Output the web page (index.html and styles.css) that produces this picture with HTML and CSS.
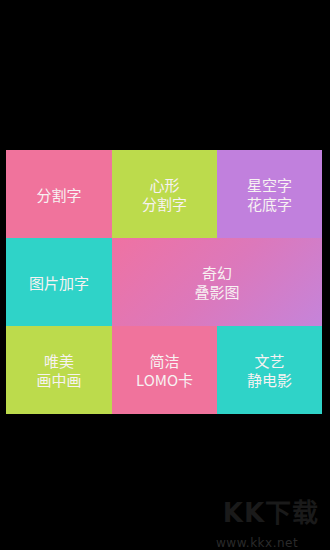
FILE: index.html
```html
<!DOCTYPE html>
<html lang="zh-CN">
<head>
<meta charset="utf-8">
<link rel="stylesheet" href="styles.css">
</head>
<body>
<div class="screen">
  <div class="grid">
    <div class="tile pink">分割字</div>
    <div class="tile green">心形<br>分割字</div>
    <div class="tile purple">星空字<br>花底字</div>
    <div class="tile cyan">图片加字</div>
    <div class="tile wide">奇幻<br>叠影图</div>
    <div class="tile green">唯美<br>画中画</div>
    <div class="tile pink">简洁<br>LOMO卡</div>
    <div class="tile cyan">文艺<br>静电影</div>
  </div>
  <div class="mark">
    <div class="mark-logo">KK下载</div>
    <div class="mark-url">www.kkx.net</div>
  </div>
</div>
</body>
</html>
```
FILE: styles.css
```css
html, body {
  margin: 0;
  padding: 0;
  background: #000;
}
.screen {
  width: 330px;
  height: 550px;
  background: #000;
  padding: 150px 8px 0 6px;
  box-sizing: border-box;
  position: relative;
}
.grid {
  display: grid;
  grid-template-columns: 106px 105px 105px;
  grid-template-rows: 88px 88px 88px;
}
.tile {
  display: flex;
  align-items: center;
  justify-content: center;
  text-align: center;
  color: #f7f2f2;
  font-family: "Noto Sans CJK SC", "Noto Sans", sans-serif;
  font-size: 15px;
  line-height: 19px;
}
.pink { background: #f0739c; }
.green { background: #bcdb4c; }
.purple { background: #c180dd; }
.cyan { background: #2fd3c8; }
.wide {
  grid-column: span 2;
  background: linear-gradient(135deg, #ef72a2 0%, #dc78bb 50%, #c584da 100%);
}
.mark {
  position: absolute;
  left: 214px;
  top: 498px;
  width: 114px;
  font-family: "DejaVu Sans", sans-serif;
}
.mark-logo {
  font-size: 26px;
  font-weight: bold;
  line-height: 30px;
  letter-spacing: 1px;
  color: #1a1a1a;
  text-align: center;
}
.mark-url {
  font-size: 12px;
  line-height: 12px;
  margin-top: 9px;
  letter-spacing: 0.5px;
  color: #2a2a2a;
  text-align: left;
  padding-left: 2px;
}
```
